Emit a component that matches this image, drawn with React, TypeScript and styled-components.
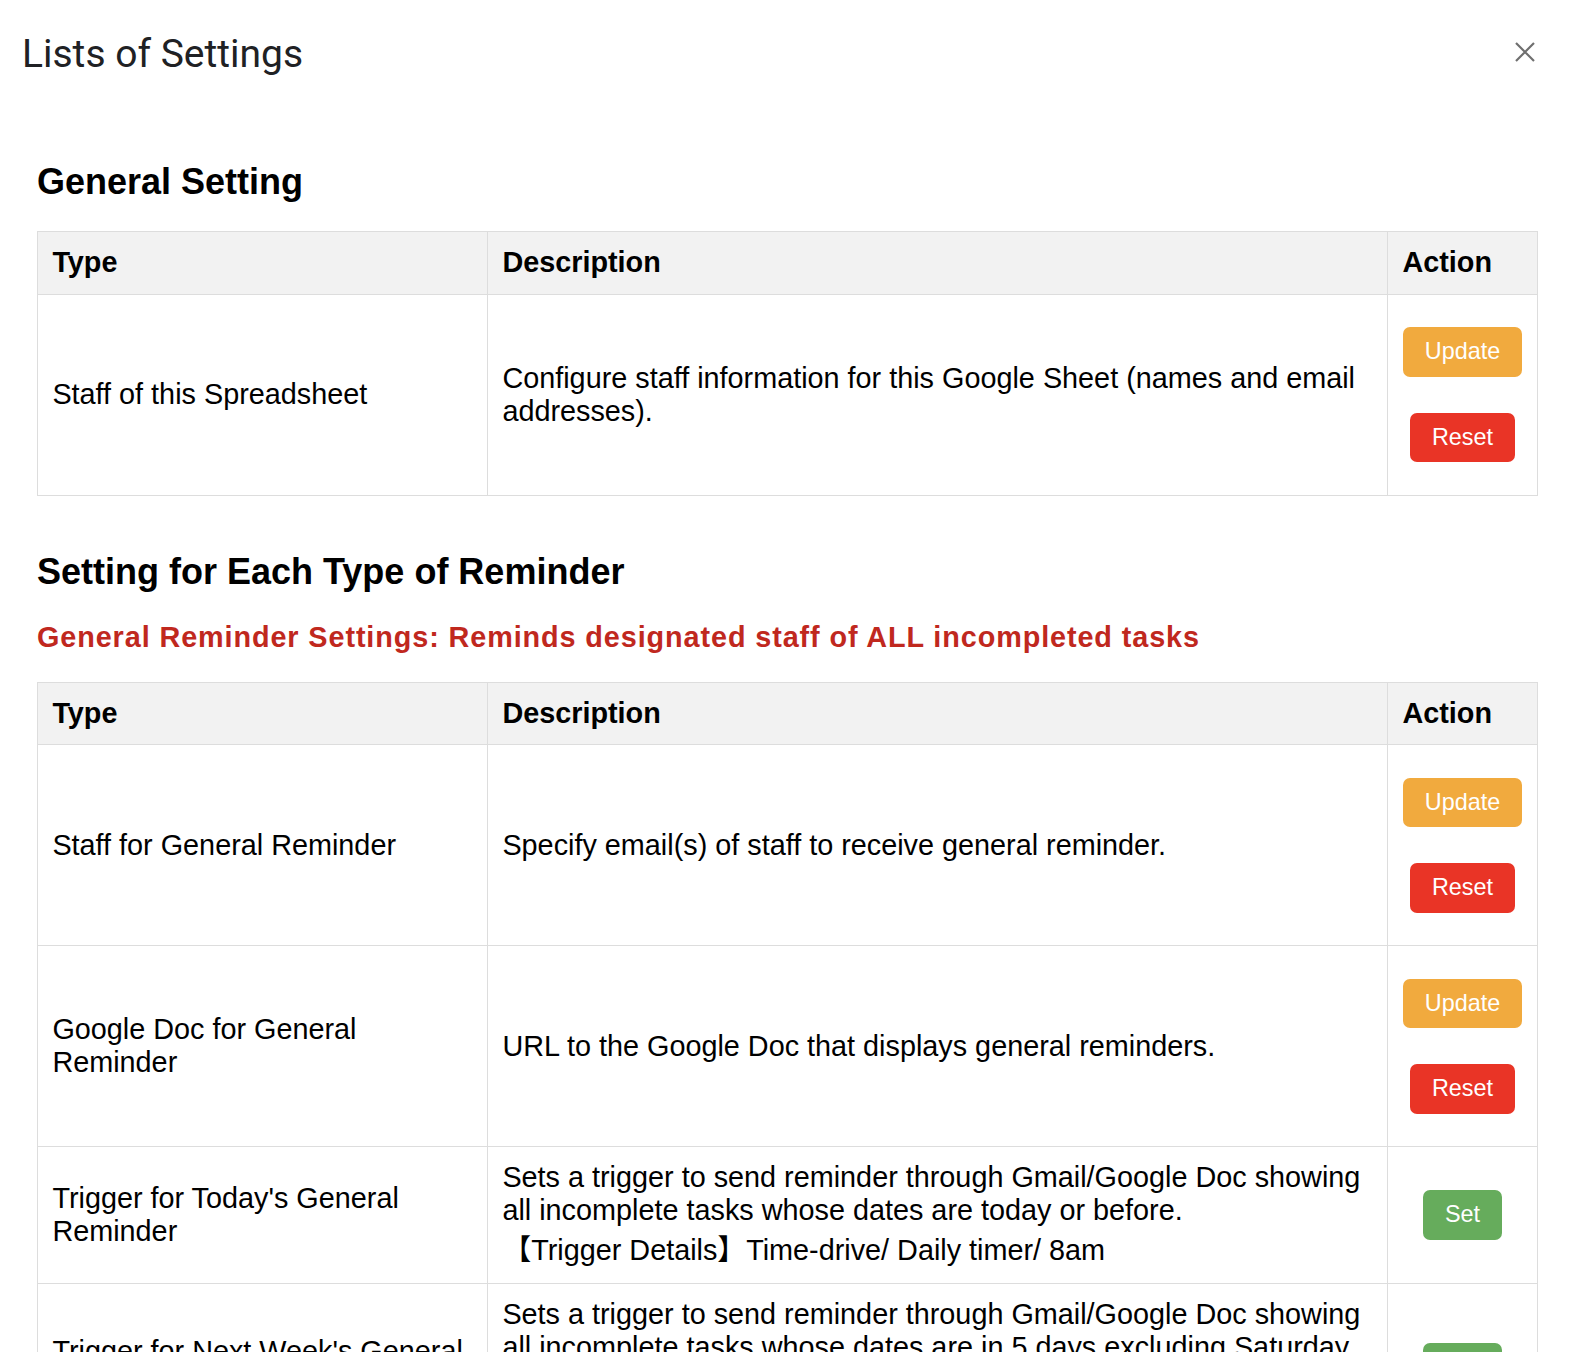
import React from "react";
import styled, { createGlobalStyle } from "styled-components";

const GlobalStyle = createGlobalStyle`
  html, body {
    margin: 0;
    padding: 0;
    background: #ffffff;
  }
  body {
    font-family: "Liberation Sans", Arial, "Noto Sans CJK JP", sans-serif;
    color: #000000;
  }
`;

const Page = styled.div`
  width: 1580px;
  box-sizing: border-box;
`;

const Header = styled.header`
  display: flex;
  justify-content: space-between;
  align-items: flex-start;
  padding: 30px 45px 0 22px;
`;

const Title = styled.h1`
  margin: 0;
  font-family: Roboto, "Open Sans", sans-serif;
  font-weight: 400;
  font-size: 39px;
  line-height: 48px;
  color: #202124;
`;

const CloseButton = styled.button`
  margin-top: 12px;
  padding: 0;
  width: 20px;
  height: 20px;
  border: none;
  background: transparent;
  color: #6f6f6f;
  display: flex;
  align-items: center;
  justify-content: center;
  cursor: pointer;
`;

const Content = styled.main`
  padding: 0 42px 40px 37px;
`;

const SectionTitle = styled.h2<{ $top: number }>`
  margin: ${(p) => p.$top}px 0 28px 0;
  font-size: 36px;
  font-weight: 700;
  line-height: normal;
`;

const Subtitle = styled.h3`
  margin: 28px 0 28px 0;
  font-size: 28.8px;
  font-weight: 700;
  letter-spacing: 0.9px;
  line-height: normal;
  color: #c0281e;
`;

const Table = styled.table`
  width: 100%;
  border-collapse: collapse;
  table-layout: fixed;
  border: 1px solid #dddddd;
`;

const HeadCell = styled.th`
  background: #f2f2f2;
  border: 1px solid #dddddd;
  padding: 14.4px;
  text-align: left;
  font-size: 28.8px;
  font-weight: 700;
  line-height: normal;
`;

const Cell = styled.td`
  border: 1px solid #dddddd;
  padding: 14.4px;
  vertical-align: middle;
  font-size: 28.8px;
  line-height: normal;
`;

const ActionCell = styled(Cell)`
  padding: 14.4px 0;
  text-align: center;
`;

const ActionStack = styled.div`
  display: flex;
  flex-direction: column;
  align-items: center;
  gap: 36px;
  padding: 18px 0;
`;

const palette = {
  update: "#f1aa3e",
  reset: "#e93426",
  set: "#66ac5c",
};

const ActionButton = styled.button<{ $kind: keyof typeof palette }>`
  height: 49.5px;
  padding: 0 21.6px;
  border: none;
  border-radius: 7px;
  background: ${(p) => palette[p.$kind]};
  color: #ffffff;
  font-family: "Liberation Sans", Arial, sans-serif;
  font-size: 23.4px;
  line-height: 1;
  cursor: pointer;
`;

type Row = {
  type: string;
  desc: React.ReactNode;
  actions: (keyof typeof palette)[];
};

const labels: Record<keyof typeof palette, string> = {
  update: "Update",
  reset: "Reset",
  set: "Set",
};

const SettingsTable: React.FC<{ rows: Row[] }> = ({ rows }) => (
  <Table>
    <colgroup>
      <col style={{ width: "30%" }} />
      <col style={{ width: "60%" }} />
      <col style={{ width: "10%" }} />
    </colgroup>
    <thead>
      <tr>
        <HeadCell>Type</HeadCell>
        <HeadCell>Description</HeadCell>
        <HeadCell>Action</HeadCell>
      </tr>
    </thead>
    <tbody>
      {rows.map((r) => (
        <tr key={r.type}>
          <Cell>{r.type}</Cell>
          <Cell>{r.desc}</Cell>
          <ActionCell>
            {r.actions.length > 1 ? (
              <ActionStack>
                {r.actions.map((a) => (
                  <ActionButton key={a} $kind={a}>
                    {labels[a]}
                  </ActionButton>
                ))}
              </ActionStack>
            ) : (
              r.actions.map((a) => (
                <ActionButton key={a} $kind={a}>
                  {labels[a]}
                </ActionButton>
              ))
            )}
          </ActionCell>
        </tr>
      ))}
    </tbody>
  </Table>
);

const generalRows: Row[] = [
  {
    type: "Staff of this Spreadsheet",
    desc: "Configure staff information for this Google Sheet (names and email addresses).",
    actions: ["update", "reset"],
  },
];

const reminderRows: Row[] = [
  {
    type: "Staff for General Reminder",
    desc: "Specify email(s) of staff to receive general reminder.",
    actions: ["update", "reset"],
  },
  {
    type: "Google Doc for General Reminder",
    desc: "URL to the Google Doc that displays general reminders.",
    actions: ["update", "reset"],
  },
  {
    type: "Trigger for Today's General Reminder",
    desc: (
      <>
        Sets a trigger to send reminder through Gmail/Google Doc showing all incomplete tasks
        whose dates are today or before.
        <br />
        【Trigger Details】Time-drive/ Daily timer/ 8am
      </>
    ),
    actions: ["set"],
  },
  {
    type: "Trigger for Next Week's General Reminder",
    desc: (
      <>
        Sets a trigger to send reminder through Gmail/Google Doc showing all incomplete tasks
        whose dates are in 5 days excluding Saturday and Sunday.
        <br />
        【Trigger Details】Time-drive/ Weekly timer/ Every Monday/ 8am
      </>
    ),
    actions: ["set"],
  },
];

export default function App() {
  return (
    <Page>
      <GlobalStyle />
      <Header>
        <Title>Lists of Settings</Title>
        <CloseButton aria-label="Close">
          <svg width="20" height="20" viewBox="0 0 20 20" fill="none">
            <path d="M1 1 L19 19 M19 1 L1 19" stroke="currentColor" strokeWidth="2.2" />
          </svg>
        </CloseButton>
      </Header>
      <Content>
        <SectionTitle $top={83}>General Setting</SectionTitle>
        <SettingsTable rows={generalRows} />
        <SectionTitle $top={55}>Setting for Each Type of Reminder</SectionTitle>
        <Subtitle>General Reminder Settings: Reminds designated staff of ALL incompleted tasks</Subtitle>
        <SettingsTable rows={reminderRows} />
      </Content>
    </Page>
  );
}
